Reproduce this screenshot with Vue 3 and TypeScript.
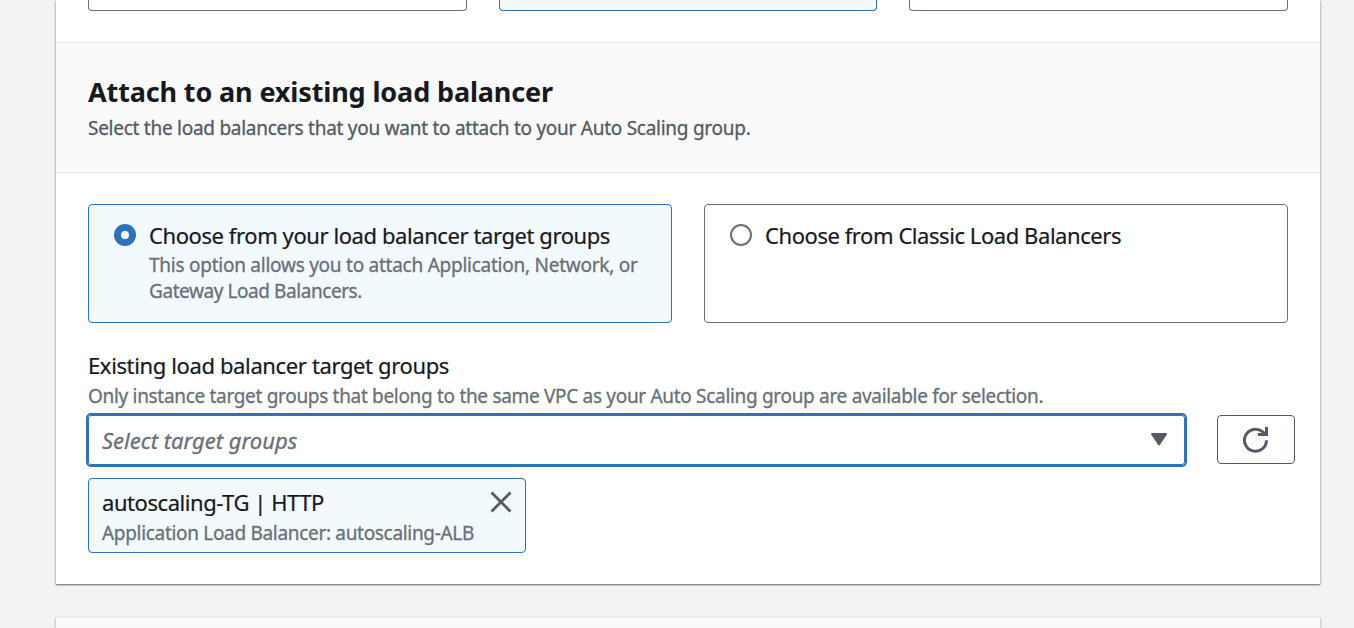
<script setup lang="ts">
import { ref } from 'vue'

interface Option {
  id: string
  label: string
  description: string[]
}

const options: Option[] = [
  {
    id: 'target-groups',
    label: 'Choose from your load balancer target groups',
    description: ['This option allows you to attach Application, Network, or', 'Gateway Load Balancers.']
  },
  { id: 'classic', label: 'Choose from Classic Load Balancers', description: [] }
]
const selected = ref('target-groups')
const attached = ref([{ name: 'autoscaling-TG | HTTP', detail: 'Application Load Balancer: autoscaling-ALB' }])

function remove(index: number) {
  attached.value.splice(index, 1)
}
</script>

<template>
  <main class="page">
    <section class="card">
      <div class="previous">
        <div class="stub"></div>
        <div class="stub chosen"></div>
        <div class="stub"></div>
      </div>
      <header class="head">
        <h2>Attach to an existing load balancer</h2>
        <p>Select the load balancers that you want to attach to your Auto Scaling group.</p>
      </header>
      <div class="body">
        <div class="options">
          <div
            v-for="o in options"
            :key="o.id"
            class="option"
            :class="[o.id, { chosen: selected === o.id }]"
            @click="selected = o.id"
          >
            <span class="radio"></span>
            <div>
              <div class="label">{{ o.label }}</div>
              <div v-for="line in o.description" :key="line" class="desc">{{ line }}</div>
            </div>
          </div>
        </div>
        <div class="field-label">Existing load balancer target groups</div>
        <div class="field-hint">
          Only instance target groups that belong to the same VPC as your Auto Scaling group are available for selection.
        </div>
        <div class="controls">
          <div class="select">
            <span>Select target groups</span>
            <svg width="18" height="15" viewBox="0 0 18 15">
              <path d="M2 2h14L9 12.500z" fill="#545b64" stroke="#545b64" stroke-width="2" stroke-linejoin="round" />
            </svg>
          </div>
          <button class="refresh" aria-label="Refresh">
            <svg width="28" height="28" viewBox="0 0 28 28" fill="none" stroke="#545b64" stroke-width="3">
              <path d="M24.500 14.200A11 11 0 1 1 20.500 5.700L23.500 8.500" />
              <path d="M24.500 1V8.500H16" />
            </svg>
          </button>
        </div>
        <div v-for="(t, i) in attached" :key="t.name" class="token">
          <div>
            <div class="name">{{ t.name }}</div>
            <div class="detail">{{ t.detail }}</div>
          </div>
          <svg width="22" height="22" viewBox="0 0 22 22" @click="remove(i)">
            <path d="M1.500 1.500l19 19M20.500 1.500l-19 19" stroke="#545b64" stroke-width="2.800" />
          </svg>
        </div>
      </div>
    </section>
    <section class="card next"></section>
  </main>
</template>

<style>
body {
  background: #f2f3f3;
  overflow: hidden;
}
</style>

<style scoped>
.page {
  box-sizing: border-box;
  height: 628px;
  overflow: hidden;
  padding: 0 34px 0 56px;
  background: #f2f3f3;
  color: #16191f;
  font-family: "Noto Sans", "Open Sans", sans-serif;
  white-space: nowrap;
}
.page * {
  box-sizing: border-box;
}
.card {
  height: 584px;
  background: #fff;
  box-shadow: 0 1px 1px 0 rgba(0, 28, 36, 0.3), 1px 1px 2px 0 rgba(0, 28, 36, 0.2), -1px 1px 2px 0 rgba(0, 28, 36, 0.2);
}
.next {
  height: 60px;
  margin-top: 33px;
  background: #fafafa;
  border-top: 1px solid #eaeded;
  box-shadow: 1px 1px 2px 0 rgba(0, 28, 36, 0.2), -1px 1px 2px 0 rgba(0, 28, 36, 0.2);
}
.previous {
  display: grid;
  grid-template-columns: 379px 378px 379px;
  column-gap: 32px;
  height: 42px;
  padding: 0 32px;
}
.stub {
  height: 11px;
  border: 1px solid #687078;
  border-top: 0;
  border-radius: 0 0 4px 4px;
}
.stub.chosen {
  border-color: #2e73b8;
  background: #f2fafe;
}
.head {
  height: 131px;
  padding: 31px 32px 0;
  background: #fafafa;
  border-top: 1px solid #eaeaea;
  border-bottom: 1px solid #eaeaea;
}
h2 {
  margin: 0;
  font-size: 27px;
  line-height: 36px;
  font-weight: 700;
  letter-spacing: -0.134px;
}
.head p {
  margin: 5px 0 0;
  font-size: 19px;
  line-height: 26px;
  letter-spacing: -0.265px;
  color: #545b64;
  -webkit-text-stroke: 0.3px currentColor;
}
.body {
  padding: 31px 25px 0 32px;
}
.options {
  display: grid;
  grid-template-columns: 584px 584px;
  gap: 32px;
}
.option {
  display: flex;
  gap: 13px;
  height: 119px;
  padding: 15px 25px;
  border: 1px solid #687078;
  border-radius: 4px;
}
.option.chosen {
  border-color: #2e73b8;
  background: #f2fafe;
}
.radio {
  flex: none;
  width: 22px;
  height: 22px;
  margin-top: 4px;
  border: 2px solid #687078;
  border-radius: 50%;
  background: #fff;
}
.chosen .radio {
  border: 7px solid #2e73b8;
}
.label,
.field-label,
.name {
  font-size: 22px;
  line-height: 30px;
  -webkit-text-stroke: 0.2px currentColor;
}
.label {
  margin-bottom: 2px;
  letter-spacing: -0.416px;
}
.classic .label {
  letter-spacing: -0.435px;
}
.desc,
.field-hint,
.detail {
  font-size: 19px;
  line-height: 26px;
  color: #687078;
  -webkit-text-stroke: 0.3px currentColor;
}
.desc {
  letter-spacing: -0.25px;
}
.desc + .desc {
  letter-spacing: -0.43px;
}
.field-label {
  margin-top: 27px;
  letter-spacing: -0.37px;
}
.field-hint {
  margin-top: 3px;
  letter-spacing: -0.314px;
}
.controls {
  display: flex;
  gap: 32px;
  margin-top: 6px;
}
.select {
  display: flex;
  align-items: center;
  justify-content: space-between;
  width: 1097px;
  height: 50px;
  padding: 0 16px 1px 13px;
  border: 1px solid #2e73b8;
  border-radius: 3px;
  box-shadow: 0 0 0 2px #2e73b8;
  font-size: 22px;
  font-style: italic;
  line-height: 30px;
  color: #687078;
  -webkit-text-stroke: 0.3px currentColor;
}
.refresh {
  display: flex;
  align-items: center;
  justify-content: center;
  width: 78px;
  height: 49px;
  padding: 0;
  background: #fff;
  border: 1px solid #545b64;
  border-radius: 4px;
}
.token {
  display: flex;
  justify-content: space-between;
  width: 438px;
  height: 75px;
  margin-top: 13px;
  padding: 8px 13px 0 13px;
  border: 1px solid #2e73b8;
  border-radius: 4px;
  background: #f2fafe;
}
.token svg {
  margin-top: 4px;
}
.name {
  letter-spacing: -0.44px;
}
.detail {
  margin-top: 3px;
  letter-spacing: -0.314px;
}
</style>
